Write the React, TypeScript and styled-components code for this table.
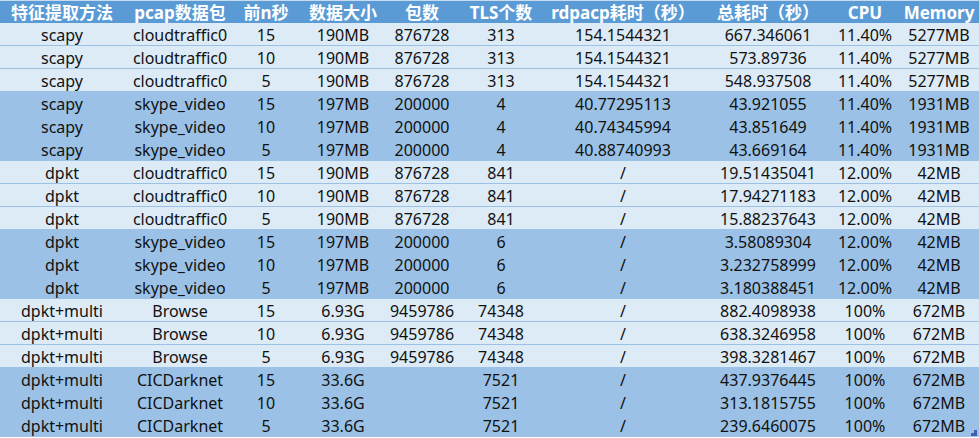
import React from "react";
import styled, { createGlobalStyle } from "styled-components";

const GlobalStyle = createGlobalStyle`
  html, body { margin: 0; padding: 0; background: #ffffff; }
  body { font-family: "Noto Sans", "Noto Sans CJK SC", sans-serif; }
`;

const COLS = "124px 112px 60px 94px 64px 94px 150px 140px 54px 94px";

const Sheet = styled.div`
  position: relative;
  width: 979px;
  height: 438px;
  overflow: hidden;
  background: #ffffff;
`;

const HeaderRow = styled.div`
  display: grid;
  grid-template-columns: ${COLS};
  height: 22px;
  border-top: 1px solid #c9dcef;
  background: #5b9bd5;
`;

const HeaderCell = styled.div`
  display: flex;
  align-items: center;
  justify-content: center;
  white-space: nowrap;
  color: #ffffff;
  font-family: "Noto Sans", "Noto Sans CJK SC", sans-serif;
  font-weight: 700;
  font-size: 17px;
  line-height: 1;
`;

const Row = styled.div<{ $dark: boolean }>`
  display: grid;
  grid-template-columns: ${COLS};
  height: 22px;
  background: ${(p) => (p.$dark ? "#9bc2e6" : "#ddebf7")};
  border-bottom: 1px solid #9bc2e6;
`;

const Cell = styled.div`
  display: flex;
  align-items: center;
  justify-content: center;
  white-space: nowrap;
  color: #111111;
  font-size: 16px;
  line-height: 1;
  padding-top: 1px;
`;

const Handle = styled.svg`
  position: absolute;
  right: 2px;
  bottom: 2px;
`;

const headers = [
  "特征提取方法",
  "pcap数据包",
  "前n秒",
  "数据大小",
  "包数",
  "TLS个数",
  "rdpacp耗时（秒）",
  "总耗时（秒）",
  "CPU",
  "Memory",
];

type Group = {
  method: string;
  pcap: string;
  size: string;
  packets: string;
  tls: string;
  rdp: string[];
  total: string[];
  cpu: string;
  mem: string;
};

const groups: Group[] = [
  {
    method: "scapy",
    pcap: "cloudtraffic0",
    size: "190MB",
    packets: "876728",
    tls: "313",
    rdp: ["154.1544321", "154.1544321", "154.1544321"],
    total: ["667.346061", "573.89736", "548.937508"],
    cpu: "11.40%",
    mem: "5277MB",
  },
  {
    method: "scapy",
    pcap: "skype_video",
    size: "197MB",
    packets: "200000",
    tls: "4",
    rdp: ["40.77295113", "40.74345994", "40.88740993"],
    total: ["43.921055", "43.851649", "43.669164"],
    cpu: "11.40%",
    mem: "1931MB",
  },
  {
    method: "dpkt",
    pcap: "cloudtraffic0",
    size: "190MB",
    packets: "876728",
    tls: "841",
    rdp: ["/", "/", "/"],
    total: ["19.51435041", "17.94271183", "15.88237643"],
    cpu: "12.00%",
    mem: "42MB",
  },
  {
    method: "dpkt",
    pcap: "skype_video",
    size: "197MB",
    packets: "200000",
    tls: "6",
    rdp: ["/", "/", "/"],
    total: ["3.58089304", "3.232758999", "3.180388451"],
    cpu: "12.00%",
    mem: "42MB",
  },
  {
    method: "dpkt+multi",
    pcap: "Browse",
    size: "6.93G",
    packets: "9459786",
    tls: "74348",
    rdp: ["/", "/", "/"],
    total: ["882.4098938", "638.3246958", "398.3281467"],
    cpu: "100%",
    mem: "672MB",
  },
  {
    method: "dpkt+multi",
    pcap: "CICDarknet",
    size: "33.6G",
    packets: "",
    tls: "7521",
    rdp: ["/", "/", "/"],
    total: ["437.9376445", "313.1815755", "239.6460075"],
    cpu: "100%",
    mem: "672MB",
  },
];

const seconds = ["15", "10", "5"];

export default function App() {
  return (
    <>
      <GlobalStyle />
      <Sheet>
        <HeaderRow>
          {headers.map((h) => (
            <HeaderCell key={h}>{h}</HeaderCell>
          ))}
        </HeaderRow>
        {groups.map((g, gi) =>
          seconds.map((s, i) => (
            <Row key={`${gi}-${i}`} $dark={gi % 2 === 1}>
              <Cell>{g.method}</Cell>
              <Cell>{g.pcap}</Cell>
              <Cell>{s}</Cell>
              <Cell>{g.size}</Cell>
              <Cell>{g.packets}</Cell>
              <Cell>{g.tls}</Cell>
              <Cell>{g.rdp[i]}</Cell>
              <Cell>{g.total[i]}</Cell>
              <Cell>{g.cpu}</Cell>
              <Cell>{g.mem}</Cell>
            </Row>
          ))
        )}
        <Handle width="6" height="6" viewBox="0 0 6 6">
          <path d="M6 0 V6 H0 V3 H3 V0 Z" fill="#3f5fb0" />
        </Handle>
      </Sheet>
    </>
  );
}
